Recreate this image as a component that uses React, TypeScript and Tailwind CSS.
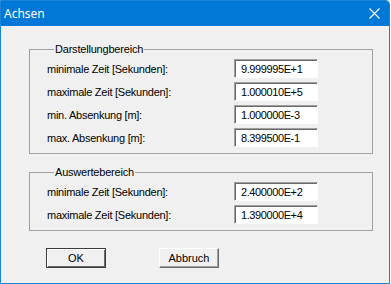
const FONT = { fontFamily: '"Liberation Sans", Arial, sans-serif' }

interface Row {
  label: string
  value: string
}

const darstellung: Row[] = [
  { label: 'minimale Zeit [Sekunden]:', value: '9.999995E+1' },
  { label: 'maximale Zeit [Sekunden]:', value: '1.000010E+5' },
  { label: 'min. Absenkung [m]:', value: '1.000000E-3' },
  { label: 'max. Absenkung [m]:', value: '8.399500E-1' },
]

const auswerte: Row[] = [
  { label: 'minimale Zeit [Sekunden]:', value: '2.400000E+2' },
  { label: 'maximale Zeit [Sekunden]:', value: '1.390000E+4' },
]

function Field({ row }: { row: Row }) {
  return (
    <div className="flex items-center h-[19px]">
      <div className="w-[187px] text-[11px] leading-[14px] text-black tracking-[-0.25px]">{row.label}</div>
      <div className="w-[84px] h-[19px] bg-white border border-t-[#a0a0a0] border-l-[#a0a0a0] border-b-[#ffffff] border-r-[#ffffff] shadow-[inset_1px_1px_0_#696969] pl-[6px] flex items-center text-[11px] leading-[14px] text-black tracking-[-0.4px]">
        {row.value}
      </div>
    </div>
  )
}

function Group({ title, rows }: { title: string; rows: Row[] }) {
  return (
    <fieldset className="w-[344px] border border-[#a0a0a0] pl-[17px] pt-[3px] pb-[6px]">
      <legend className="ml-[7px] px-[1px] text-[11px] leading-[14px] text-black tracking-[-0.2px]">{title}</legend>
      <div className="flex flex-col gap-[4px]">
        {rows.map((r) => (
          <Field key={r.label + r.value} row={r} />
        ))}
      </div>
    </fieldset>
  )
}

export default function App() {
  return (
    <div className="w-[391px] h-[284px] bg-white" style={FONT}>
      <div className="w-[390px] h-[284px] border border-[#1883d7] bg-[#f0f0f0] rounded-tr-[4px] overflow-hidden flex flex-col">
        {/* Title bar */}
        <div className="h-[25px] bg-[#0078d7] flex items-center justify-between pl-[3px] pr-[8px]">
          <span className="text-white text-[12px]" style={{ fontFamily: '"Noto Sans", "Open Sans", sans-serif' }}>
            Achsen
          </span>
          <svg width="11" height="11" viewBox="0 0 11 11" className="mr-[1px]">
            <path d="M0.5 0.5 L10.5 10.5 M10.5 0.5 L0.5 10.5" stroke="#ffffff" strokeWidth="1.1" fill="none" />
          </svg>
        </div>

        {/* Body */}
        <div className="flex flex-col pl-[28px] pt-[16px]">
          <Group title="Darstellungbereich" rows={darstellung} />
          <div className="h-[11px]" />
          <Group title="Auswertebereich" rows={auswerte} />

          <div className="flex mt-[17px] pl-[17px] gap-[53px]">
            <button className="w-[60px] h-[20px] bg-[#f0f0f0] border border-[#3c3c3c] shadow-[inset_1px_1px_0_#ffffff,inset_-1px_-1px_0_#696969] text-[11px] text-black">
              OK
            </button>
            <button className="w-[60px] h-[20px] bg-[#f0f0f0] border border-t-[#ffffff] border-l-[#ffffff] border-b-[#696969] border-r-[#696969] shadow-[inset_-1px_-1px_0_#a0a0a0] text-[11px] text-black">
              Abbruch
            </button>
          </div>
        </div>
      </div>
    </div>
  )
}
